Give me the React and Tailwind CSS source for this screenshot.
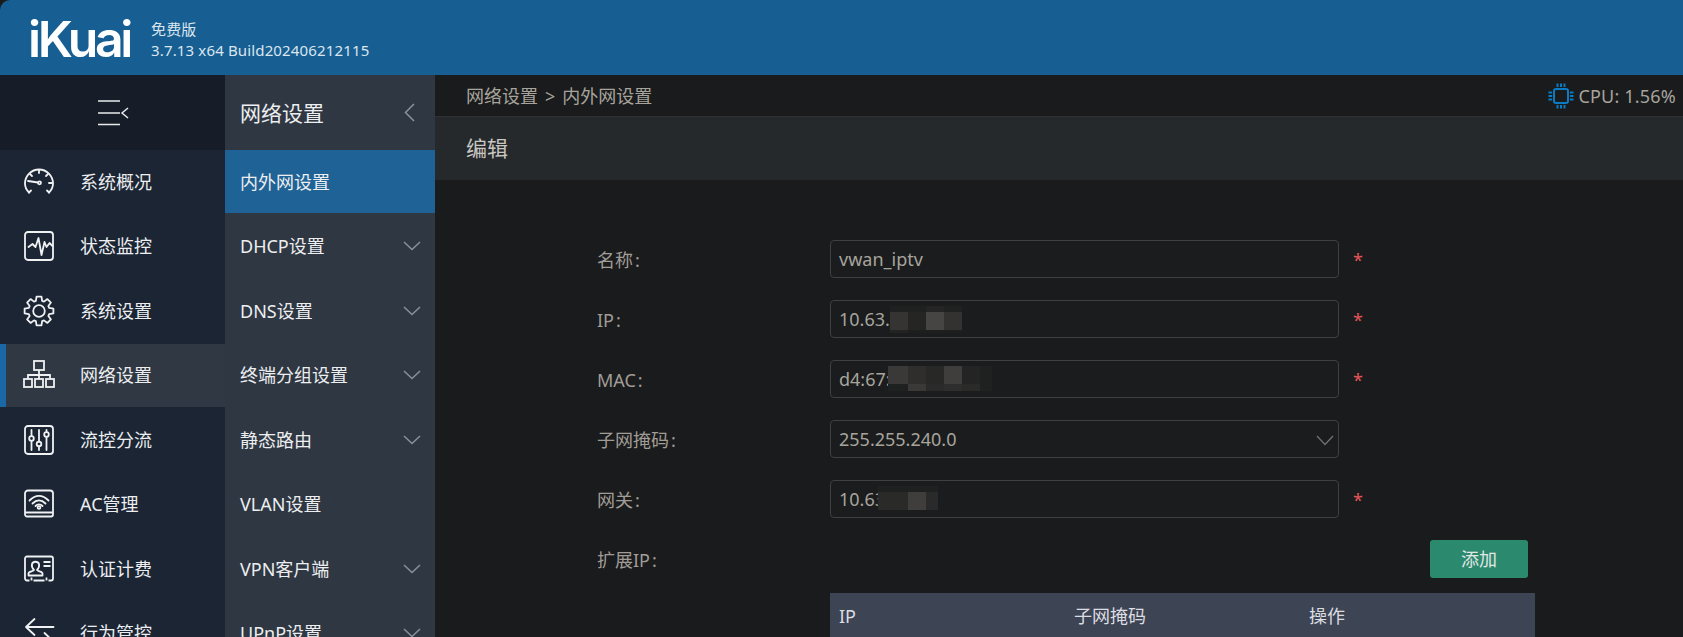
import React from 'react'

const iconProps = { fill: 'none', stroke: '#f0f1f2', strokeWidth: 1.8, strokeLinecap: 'round', strokeLinejoin: 'round' }

// 8 teeth gear outline, same as the one in the side nav
const gearPath = (() => {
  const cx = 16
  const cy = 16
  const pts = []
  for (let i = 0; i < 8; i++) {
    const a = (i * Math.PI) / 4
    const at = (r, d) => `${(cx + r * Math.cos(a + d)).toFixed(2)} ${(cy + r * Math.sin(a + d)).toFixed(2)}`
    pts.push(at(10.6, -0.3), at(14.6, -0.17), at(14.6, 0.17), at(10.6, 0.3))
  }
  return 'M' + pts.join('L') + 'Z'
})()

const GaugeIcon = () => (
  <svg width="32" height="32" viewBox="0 0 32 32" {...iconProps}>
    <path d="M6 26.500C3 23.500 2 20.500 2 17.500A14 14 0 0 1 30 17.500C30 20.500 29 23.500 26 26.500" />
    <path d="M16 4v3M7 8l2 2M25 8l-2 2M29 17h-3M6 26.500l2-2M26 26.500l-2-2" />
    <path d="M5 15l10 1.500" />
    <circle cx="16.500" cy="16.800" r="1.500" />
  </svg>
)

const PulseIcon = () => (
  <svg width="32" height="32" viewBox="0 0 32 32" {...iconProps}>
    <rect x="2" y="2" width="28" height="28" rx="3" />
    <path d="M5.500 17l4-3 3 3 3-9 3 17 3-13 2 5 3-4 3 3" />
  </svg>
)

const GearIcon = () => (
  <svg width="32" height="32" viewBox="0 0 32 32" {...iconProps}>
    <path d={gearPath} />
    <circle cx="16" cy="16" r="5.800" />
  </svg>
)

const NetworkIcon = () => (
  <svg width="32" height="32" viewBox="0 0 32 32" {...iconProps} strokeLinecap="butt" strokeLinejoin="miter">
    <rect x="11" y="2" width="10" height="9" />
    <rect x="1" y="20" width="8" height="8" />
    <rect x="12" y="20" width="8" height="8" />
    <rect x="23" y="20" width="8" height="8" />
    <path d="M16 11v9M5 20v-4h22v4" />
  </svg>
)

const SlidersIcon = () => (
  <svg width="32" height="32" viewBox="0 0 32 32" {...iconProps}>
    <rect x="2" y="2" width="28" height="28" rx="3" />
    <path d="M8.500 6v6M8.500 17v9M16 6v12M16 22v4M23.500 6v2M23.500 13v13" />
    <circle cx="8.500" cy="14.500" r="2.300" />
    <circle cx="16" cy="20" r="2.300" />
    <circle cx="23.500" cy="10.500" r="2.300" />
  </svg>
)

const WifiIcon = () => (
  <svg width="32" height="32" viewBox="0 0 32 32" {...iconProps}>
    <path d="M5 2.500h22a3 3 0 0 1 3 3v21a2 2 0 0 1-2 2H4a2 2 0 0 1-2-2v-21a3 3 0 0 1 3-3zM2.500 24.500h27" />
    <path d="M6.500 12.500c6-6 13-6 19 0M9.500 15.500c4-4 9-4 13 0M12.500 18c2-2 5-2 7 0" />
    <circle cx="16" cy="19.500" r="1.400" />
  </svg>
)

const CardIcon = () => (
  <svg width="32" height="32" viewBox="0 0 32 32" {...iconProps} strokeLinecap="butt">
    <path d="M6.500 27.500H4a2 2 0 0 1-2-2V5.500a2 2 0 0 1 2-2h24a2 2 0 0 1 2 2v20a2 2 0 0 1-2 2h-2.500" />
    <path d="M8.500 27.500v-3M10.500 27.500h11M23.500 27.500v-3" />
    <path d="M5.500 22.500v-2c0-2 5-2 5.500-3.500-2-2-2.500-4-2-6 1-3 6-3 7 0 .5 2 0 4-2 6 .5 1.500 5.500 1.500 5.500 3.500v2z" />
    <path d="M20.500 9h7M20.500 13h7" strokeWidth="2" />
  </svg>
)

const ArrowsIcon = () => (
  <svg width="32" height="32" viewBox="0 0 32 32" {...iconProps}>
    <path d="M3 10h27.500M11.500 2L3 10l8.500 8" />
    <path d="M2.500 24h27M21.500 16l8.500 8-8.500 8" />
  </svg>
)

const Chevron = () => (
  <svg width="18" height="10" viewBox="0 0 18 10" fill="none" stroke="#8b9199" strokeWidth="1.500">
    <path d="M1 1l8 7.500L17 1" />
  </svg>
)

const navItems = [
  { label: '系统概况', icon: <GaugeIcon /> },
  { label: '状态监控', icon: <PulseIcon /> },
  { label: '系统设置', icon: <GearIcon /> },
  { label: '网络设置', icon: <NetworkIcon />, active: true },
  { label: '流控分流', icon: <SlidersIcon /> },
  { label: 'AC管理', icon: <WifiIcon /> },
  { label: '认证计费', icon: <CardIcon /> },
  { label: '行为管控', icon: <ArrowsIcon /> },
]

const subItems = [
  { label: '内外网设置', active: true },
  { label: 'DHCP设置', more: true },
  { label: 'DNS设置', more: true },
  { label: '终端分组设置', more: true },
  { label: '静态路由', more: true },
  { label: 'VLAN设置' },
  { label: 'VPN客户端', more: true },
  { label: 'UPnP设置', more: true },
]

function Sidebar() {
  return (
    <div className="w-[225px] shrink-0 bg-[#1b2534]">
      <div className="h-[75px] bg-[#171d28] flex items-center justify-center pl-[3px]">
        <svg width="32" height="26" viewBox="0 0 32 26" fill="none" stroke="#e8eaec" strokeWidth="1.500">
          <path d="M0 1h22M0 13h22M0 24.500h22" />
          <path d="M30 8l-6 5 6 5" />
        </svg>
      </div>
      {navItems.map((item) => (
        <div
          key={item.label}
          className={
            item.active
              ? 'h-[63px] mb-[1.5px] flex items-center bg-[#303844] border-l-[6px] border-[#1a69a6]'
              : 'h-[63px] mb-[1.5px] flex items-center pl-[6px]'
          }
        >
          <div className="w-[66px] flex justify-center">{item.icon}</div>
          <span className="text-[18px] text-[#eceef0] ml-[8px] pt-[1px]">{item.label}</span>
        </div>
      ))}
    </div>
  )
}

function SubMenu() {
  return (
    <div className="w-[210px] shrink-0 bg-[#2f3742]">
      <div className="h-[75px] flex items-center justify-between pl-[15px] pr-[20px]">
        <span className="text-[21px] text-[#eceef0] pt-[2px]">网络设置</span>
        <svg width="11" height="19" viewBox="0 0 11 19" fill="none" stroke="#8b9199" strokeWidth="1.500">
          <path d="M10 1L1.500 9.500 10 18" />
        </svg>
      </div>
      {subItems.map((item) => (
        <div
          key={item.label}
          className={
            item.active
              ? 'h-[63px] mb-[1.5px] flex items-center justify-between pl-[15px] pr-[14px] bg-[#1f6295]'
              : 'h-[63px] mb-[1.5px] flex items-center justify-between pl-[15px] pr-[14px]'
          }
        >
          <span className="text-[18px] text-[#eceef0] pt-[1px]">{item.label}</span>
          {item.more && <Chevron />}
        </div>
      ))}
    </div>
  )
}

function Field({ label, value, required, children }) {
  return (
    <div className="flex items-center h-[38px] mb-[22px]">
      <div className="w-[233px] shrink-0 text-[18px] text-[#a19d96] pt-[2px]">
        {label}<span className="ml-[2px]">:</span>
      </div>
      <div className="relative w-[509px] h-full shrink-0 flex items-center px-[8px] rounded-[4px] border border-[#3e4042] bg-[#1a1c1e] text-[18px] text-[#a8a49c] overflow-hidden">
        <span className="pt-[1px]">{value}</span>
        {children}
      </div>
      {required && <span className="ml-[14px] pt-[2px] text-[18px] leading-none text-[#e0555a]">*</span>}
    </div>
  )
}

function Logo() {
  return (
    <div className="w-[104px] ml-[28px] pt-[2px] font-['Inter',sans-serif] font-semibold text-[50px] leading-none tracking-[-3.400px] text-white">
      iKuai
    </div>
  )
}

export default function App() {
  return (
    <div className="w-full h-screen overflow-hidden flex flex-col bg-[#191b1d] font-['Noto_Sans','Noto_Sans_CJK_SC',sans-serif]">
      <header className="h-[75px] shrink-0 bg-[#175e92] rounded-tl-[10px] flex items-center">
        <Logo />
        <div className="ml-[19px] text-[15px] leading-[21px] tracking-[0.15px] text-[#dbe6ee] pt-[4px]">
          <div>免费版</div>
          <div>3.7.13 x64 Build202406212115</div>
        </div>
      </header>

      <div className="flex flex-1 min-h-0">
        <Sidebar />
        <SubMenu />

        <main className="flex-1 min-w-0">
          <div className="h-[42px] flex items-center justify-between pl-[31px] pr-[7px] border-b border-[#2e3133] text-[18px] text-[#a8a49c]">
            <span className="pt-[1px]">网络设置<span className="mx-[7px]">&gt;</span>内外网设置</span>
            <span className="flex items-center gap-[4px] tracking-[0.2px]">
              <svg width="26" height="26" viewBox="0 0 26 26" fill="none" stroke="#0b7bc4" strokeWidth="2">
                <rect x="6" y="6" width="14" height="14" rx="2" />
                <path d="M9.500 0.500v3.500M13 0.500v3.500M16.500 0.500v3.500M9.500 22v3.500M13 22v3.500M16.500 22v3.500M0.500 9.500H4M0.500 13H4M0.500 16.500H4M22 9.500h3.500M22 13h3.500M22 16.500h3.500" />
              </svg>
              <span className="pt-[1px]">CPU: 1.56%</span>
            </span>
          </div>
          <div className="h-[63px] flex items-center pl-[31px] bg-[#25292c] text-[21px] text-[#c9c7c2]">编辑</div>

          <div className="pt-[60px] pl-[162px]">
            <Field label="名称" value="vwan_iptv" required />
            <Field label="IP" value="10.63." required>
              <div className="absolute left-[59px] top-[5px] grid grid-cols-[18px_18px_18px_18px] grid-rows-[6px_18px_3px]">
                <div className="bg-[#1f2120]" />
                <div className="bg-[#1f2120]" />
                <div className="bg-[#242524]" />
                <div className="bg-[#202221]" />
                <div className="bg-[#353433]" />
                <div className="bg-[#252524]" />
                <div className="bg-[#474544]" />
                <div className="bg-[#333231]" />
                <div className="bg-[#232322]" />
                <div className="bg-[#1d1f1e]" />
                <div className="bg-[#1d1f1e]" />
                <div className="bg-[#1d1f1e]" />
              </div>
            </Field>
            <Field label="MAC" value="d4:67:" required>
              <div className="absolute left-[57px] top-[5px] grid grid-cols-[20px_18px_18px_18px_18px_12px] grid-rows-[18px_7px]">
                <div className="bg-[#3a3938]" />
                <div className="bg-[#2f2e2d]" />
                <div className="bg-[#282827]" />
                <div className="bg-[#3f3e3d]" />
                <div className="bg-[#232423]" />
                <div className="bg-[#1f2120]" />
                <div className="bg-[#1f2120]" />
                <div className="bg-[#3a3938]" />
                <div className="bg-[#2b2a2a]" />
                <div className="bg-[#2f2e2e]" />
                <div className="bg-[#2a2a29]" />
                <div className="bg-[#1f2120]" />
              </div>
            </Field>
            <Field label="子网掩码" value="255.255.240.0">
              <svg className="absolute right-[4px] top-[14px]" width="18" height="11" viewBox="0 0 18 11" fill="none" stroke="#6f7173" strokeWidth="1.300">
                <path d="M1 1l8 8.500L17 1" />
              </svg>
            </Field>
            <Field label="网关" value="10.63" required>
              <div className="absolute left-[47px] top-[5px] grid grid-cols-[12px_18px_18px_12px] grid-rows-[6px_18px]">
                <div className="bg-[#1f2120]" />
                <div className="bg-[#1f2120]" />
                <div className="bg-[#1f2120]" />
                <div className="bg-[#1f2120]" />
                <div className="bg-[#2a2a29]" />
                <div className="bg-[#2a2a29]" />
                <div className="bg-[#3f3e3c]" />
                <div className="bg-[#2b2a2a]" />
              </div>
            </Field>

            <div className="flex items-center h-[38px] mb-[15px] w-[940px]">
              <div className="w-[233px] shrink-0 text-[18px] text-[#a19d96] pt-[2px]">
                扩展IP<span className="ml-[2px]">:</span>
              </div>
              <div className="w-[698px] flex justify-end">
                <button className="w-[98px] h-[38px] rounded-[3px] bg-[#2b8a6e] text-[18px] text-[#e2e6e4]">添加</button>
              </div>
            </div>

            <div className="ml-[233px] w-[705px] h-[50px] grid grid-cols-3 items-start pt-[10px] bg-[#3d4454] text-[18px] text-[#dcdde0]">
              <div className="pl-[9px]">IP</div>
              <div className="pl-[9px]">子网掩码</div>
              <div className="pl-[9px]">操作</div>
            </div>
          </div>
        </main>
      </div>
    </div>
  )
}
